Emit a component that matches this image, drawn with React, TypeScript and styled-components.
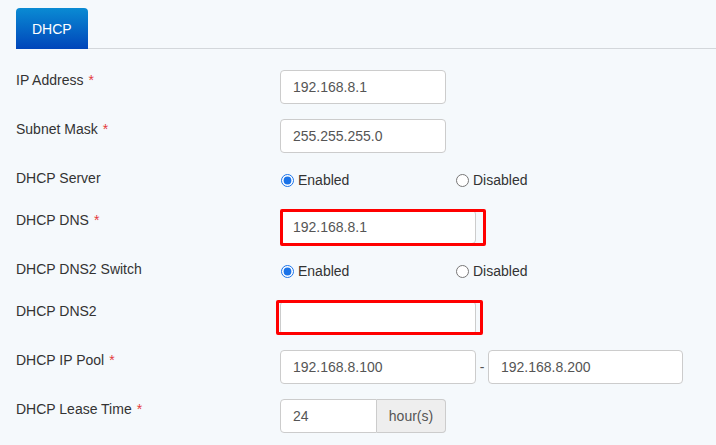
import React from "react";
import styled, { createGlobalStyle } from "styled-components";

const GlobalStyle = createGlobalStyle`
  html, body {
    margin: 0;
    padding: 0;
    background: #f5f9fc;
  }
  body {
    font-family: "Liberation Sans", Arial, sans-serif;
    font-size: 14px;
    color: #333;
  }
`;

const Page = styled.div`
  padding: 8px 0 0 16px;
  min-height: 437px;
`;

const TabBar = styled.div`
  display: flex;
  border-bottom: 1px solid #d3d7db;
`;

const Tab = styled.div`
  height: 41px;
  padding: 0 16px;
  margin-bottom: -1px;
  display: flex;
  align-items: center;
  border-radius: 4px 4px 0 0;
  background: linear-gradient(#0a8bd3, #0045ba);
  color: #fff;
  font-size: 14px;
`;

const Form = styled.div`
  margin-top: 21px;
`;

const Row = styled.div`
  display: flex;
  margin-bottom: 15px;
`;

const Label = styled.div`
  width: 264px;
  flex: none;
  line-height: 20px;
  color: #333;
`;

const Required = styled.span`
  color: #e4393c;
  margin-left: 5px;
`;

const Field = styled.div<{ $radio?: boolean }>`
  position: relative;
  display: flex;
  align-items: center;
  ${(p) => (p.$radio ? "padding: 2px 0 5px; height: 20px;" : "")}
`;

const TextInput = styled.input<{ $width?: number; $joined?: boolean }>`
  box-sizing: border-box;
  width: ${(p) => p.$width ?? 196}px;
  height: 34px;
  padding: 6px 12px;
  border: 1px solid #ccc;
  border-radius: ${(p) => (p.$joined ? "4px 0 0 4px" : "4px")};
  background: #fff;
  color: #555;
  font: 14px "Liberation Sans", Arial, sans-serif;
  outline: none;
`;

const Addon = styled.span`
  box-sizing: border-box;
  width: 69px;
  height: 34px;
  display: flex;
  align-items: center;
  justify-content: center;
  border: 1px solid #ccc;
  border-left: 0;
  border-radius: 0 4px 4px 0;
  background: #eee;
  color: #555;
`;

const Dash = styled.span`
  width: 12px;
  text-align: center;
  color: #555;
`;

const RadioOption = styled.label`
  width: 175px;
  display: flex;
  align-items: center;
  line-height: 20px;
  color: #333;

  input {
    width: 13px;
    height: 13px;
    margin: 0 4px 0 1px;
    accent-color: #1a73e8;
  }
`;

// red frame drawn over a field to call it out
const Highlight = styled.div<{ $left: number; $top: number; $w: number; $h: number }>`
  position: absolute;
  left: ${(p) => p.$left}px;
  top: ${(p) => p.$top}px;
  width: ${(p) => p.$w}px;
  height: ${(p) => p.$h}px;
  box-sizing: border-box;
  border: 3px solid #ff0000;
  border-radius: 2px;
  pointer-events: none;
`;

const Switch = ({ name }: { name: string }) => (
  <Field $radio>
    <RadioOption>
      <input type="radio" name={name} defaultChecked />
      Enabled
    </RadioOption>
    <RadioOption>
      <input type="radio" name={name} />
      Disabled
    </RadioOption>
  </Field>
);

const App = () => {
  return <Page>
    <GlobalStyle />
    <TabBar>
      <Tab>DHCP</Tab>
    </TabBar>
    <Form>
      <Row>
        <Label>IP Address<Required>*</Required></Label>
        <Field><TextInput $width={166} defaultValue={'192.168.8.1'} /></Field>
      </Row>
      <Row>
        <Label>Subnet Mask<Required>*</Required></Label>
        <Field><TextInput $width={166} defaultValue={'255.255.255.0'} /></Field>
      </Row>
      <Row>
        <Label>DHCP Server</Label>
        <Switch name={'dhcp-server'} />
      </Row>
      <Row>
        <Label>DHCP DNS<Required>*</Required></Label>
        <Field>
          <TextInput defaultValue={'192.168.8.1'} />
          <Highlight $left={0} $top={-1} $w={206} $h={37} />
        </Field>
      </Row>
      <Row>
        <Label>DHCP DNS2 Switch</Label>
        <Switch name={'dns2-switch'} />
      </Row>
      <Row>
        <Label>DHCP DNS2</Label>
        <Field>
          <TextInput defaultValue={''} />
          <Highlight $left={-4} $top={-1} $w={207} $h={35} />
        </Field>
      </Row>
      <Row>
        <Label>DHCP IP Pool<Required>*</Required></Label>
        <Field>
          <TextInput defaultValue={'192.168.8.100'} />
          <Dash>-</Dash>
          <TextInput $width={195} defaultValue={'192.168.8.200'} />
        </Field>
      </Row>
      <Row>
        <Label>DHCP Lease Time<Required>*</Required></Label>
        <Field>
          <TextInput $width={97} $joined defaultValue={'24'} />
          <Addon>hour(s)</Addon>
        </Field>
      </Row>
    </Form>
  </Page>;
};

export default App;
